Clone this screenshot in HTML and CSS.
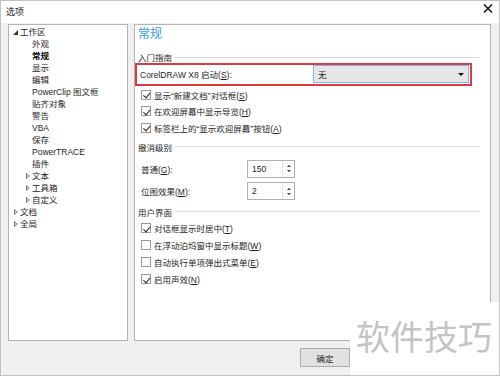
FILE: index.html
```html
<!DOCTYPE html>
<html lang="zh-CN">
<head>
    <meta charset="UTF-8" />
    <meta name="viewport" content="width=device-width, initial-scale=1.0"/>
    <title>选项</title>
    <link rel="stylesheet" href="styles.css">
</head>
<body>
    <div class="dialog">
        <div class="titlebar">
            <span class="title">选项</span>
            <svg class="close" width="10" height="9" viewBox="0 0 10 9">
                <path d="M1 0.5 L9 8.5 M9 0.5 L1 8.5" stroke="#1a1a1a" stroke-width="1.6" fill="none"/>
            </svg>
        </div>

        <div class="panels">
            <!-- Tree -->
            <div class="tree">
                <div class="node lvl0"><span class="tog open"></span>工作区</div>
                <div class="node lvl1"><span class="tog"></span>外观</div>
                <div class="node lvl1 selected"><span class="tog"></span>常规</div>
                <div class="node lvl1"><span class="tog"></span>显示</div>
                <div class="node lvl1"><span class="tog"></span>编辑</div>
                <div class="node lvl1"><span class="tog"></span>PowerClip 图文框</div>
                <div class="node lvl1"><span class="tog"></span>贴齐对象</div>
                <div class="node lvl1"><span class="tog"></span>警告</div>
                <div class="node lvl1"><span class="tog"></span>VBA</div>
                <div class="node lvl1"><span class="tog"></span>保存</div>
                <div class="node lvl1"><span class="tog"></span>PowerTRACE</div>
                <div class="node lvl1"><span class="tog"></span>插件</div>
                <div class="node lvl1"><span class="tog closed"></span>文本</div>
                <div class="node lvl1"><span class="tog closed"></span>工具箱</div>
                <div class="node lvl1"><span class="tog closed"></span>自定义</div>
                <div class="node lvl0"><span class="tog closed"></span>文档</div>
                <div class="node lvl0"><span class="tog closed"></span>全局</div>
            </div>

            <!-- Page -->
            <div class="page">
                <div class="page-title">常规</div>

                <div class="group g-start"><span>入门指南</span><i></i></div>
                <div class="startup-row">
                    <span class="label">CorelDRAW X8 启动(<u>S</u>):</span>
                    <div class="select"><span>无</span><b class="arrow"></b></div>
                </div>
                <div class="checks c-start">
                    <label class="check"><span class="box on"></span><span>显示“新建文档”对话框(<u>S</u>)</span></label>
                    <label class="check"><span class="box on"></span><span>在欢迎屏幕中显示导览(<u>H</u>)</span></label>
                    <label class="check"><span class="box on"></span><span>标签栏上的“显示欢迎屏幕”按钮(<u>A</u>)</span></label>
                </div>

                <div class="group g-undo"><span>撤消级别</span><i></i></div>
                <div class="spins">
                    <div class="spin-row">
                        <span class="spin-label">普通(<u>G</u>):</span>
                        <div class="spin"><span>150</span><div class="spin-btns"><b class="up"></b><b class="down"></b></div></div>
                    </div>
                    <div class="spin-row">
                        <span class="spin-label">位图效果(<u>M</u>):</span>
                        <div class="spin"><span>2</span><div class="spin-btns"><b class="up"></b><b class="down"></b></div></div>
                    </div>
                </div>

                <div class="group g-ui"><span>用户界面</span><i></i></div>
                <div class="checks c-ui">
                    <label class="check tall"><span class="box on"></span><span>对话框显示时居中(<u>T</u>)</span></label>
                    <label class="check tall"><span class="box"></span><span>在浮动泊坞窗中显示标题(<u>W</u>)</span></label>
                    <label class="check tall"><span class="box"></span><span>自动执行单项弹出式菜单(<u>E</u>)</span></label>
                    <label class="check tall"><span class="box on"></span><span>启用声效(<u>N</u>)</span></label>
                </div>
            </div>
        </div>

        <div class="footer">
            <button>确定</button>
        </div>

        <div class="watermark">软件技巧</div>
    </div>
</body>
</html>
```

FILE: styles.css
```css
* {
    margin: 0;
    padding: 0;
    box-sizing: border-box;
}

body {
    font-family: "Liberation Sans", "Noto Sans CJK SC", sans-serif;
    font-size: 8.5px;
    color: #1e1e1e;
    background: #ffffff;
    text-autospace: no-autospace;
}

u {
    text-decoration: underline;
    text-underline-offset: 1px;
}

.dialog {
    position: relative;
    width: 500px;
    height: 376px;
    border: 1px solid #c2c2c2;
    background: #f0f0f0;
    display: flex;
    flex-direction: column;
    overflow: hidden;
}

/* Title bar */
.titlebar {
    height: 22px;
    background: #ffffff;
    display: flex;
    align-items: center;
    justify-content: space-between;
    padding: 0 6px 2px 5px;
}

.title {
    font-size: 9px;
    color: #222;
}

.close {
    margin-top: -6px;
}

/* Panels */
.panels {
    display: flex;
    gap: 6px;
    margin-top: 1px;
    padding-left: 7px;
    height: 317px;
}

.tree {
    width: 120px;
    background: #ffffff;
    border: 1px solid #b4b4b4;
    padding-top: 1px;
}

.node {
    height: 12px;
    line-height: 12px;
    display: flex;
    align-items: center;
    white-space: nowrap;
}

.node.lvl0 {
    padding-left: 3px;
}

.node.lvl1 {
    padding-left: 15px;
}

.node.selected {
    color: #000;
    text-shadow: 0 0 0.3px #000;
}

.tog {
    width: 8px;
    height: 12px;
    position: relative;
    flex: none;
}

.tog.open::before {
    content: '';
    position: absolute;
    left: 1px;
    top: 4px;
    border-left: 5px solid transparent;
    border-bottom: 5px solid #333;
}

.tog.closed::before {
    content: '';
    position: absolute;
    left: 2px;
    top: 3px;
    width: 0;
    height: 0;
    border-top: 3px solid transparent;
    border-bottom: 3px solid transparent;
    border-left: 4px solid #777;
}

.tog.closed::after {
    content: '';
    position: absolute;
    left: 3px;
    top: 4.5px;
    width: 0;
    height: 0;
    border-top: 1.5px solid transparent;
    border-bottom: 1.5px solid transparent;
    border-left: 2px solid #fff;
}

.page {
    width: 357px;
    background: #ffffff;
    border: 1px solid #b4b4b4;
    display: flex;
    flex-direction: column;
}

.page-title {
    height: 18px;
    line-height: 18px;
    margin-left: 3px;
    font-size: 12px;
    color: #3a9be0;
}

/* Group headers */
.group {
    height: 12px;
    display: flex;
    align-items: center;
    margin: 0 10px 0 3px;
}

.group i {
    flex: 1;
    height: 1px;
    background: #dcdcdc;
    margin-left: 3px;
}

.g-start { margin-top: 8px; }
.g-undo { margin-top: 4.5px; }
.g-ui { margin-top: 3px; }

/* Startup row */
.startup-row {
    width: 337px;
    height: 23px;
    border: 2px solid #dc3a40;
    display: flex;
    align-items: center;
    justify-content: space-between;
    padding: 0 1px 1px 3px;
}

.select {
    width: 156px;
    height: 18px;
    background: #e6e6e6;
    border: 1px solid #80b6ea;
    display: flex;
    align-items: center;
    justify-content: space-between;
    padding: 0 4px;
}

.arrow {
    width: 0;
    height: 0;
    border-left: 3px solid transparent;
    border-right: 3px solid transparent;
    border-top: 3px solid #111;
}

/* Checkboxes */
.checks {
    display: flex;
    flex-direction: column;
    margin-left: 6px;
}

.c-start { margin-top: 0.5px; }
.c-ui { margin-top: 2px; }

.check {
    height: 16.5px;
    display: flex;
    align-items: center;
    gap: 3px;
    white-space: nowrap;
}

.check.tall {
    height: 17px;
}

.box {
    width: 10px;
    height: 10px;
    border: 1px solid #9a9a9a;
    background: #fff;
    position: relative;
    flex: none;
}

.box.on::after {
    content: '';
    position: absolute;
    left: 2.5px;
    top: 0.5px;
    width: 3px;
    height: 5.5px;
    border-right: 1.3px solid #222;
    border-bottom: 1.3px solid #222;
    transform: rotate(40deg);
}

/* Spin boxes */
.spins {
    margin-top: 5px;
    margin-left: 6px;
}

.spin-row {
    height: 22.5px;
    display: flex;
    align-items: center;
}

.spin-label {
    width: 106px;
}

.spin {
    width: 48px;
    height: 18px;
    border: 1px solid #aeb1b8;
    display: flex;
    align-items: center;
    justify-content: space-between;
    padding-left: 4px;
}

.spin-btns {
    width: 12px;
    height: 100%;
    border-left: 1px solid #e3e3e3;
    display: flex;
    flex-direction: column;
    align-items: center;
    justify-content: center;
    gap: 3px;
}

.spin-btns .up {
    border-left: 2px solid transparent;
    border-right: 2px solid transparent;
    border-bottom: 2.5px solid #333;
}

.spin-btns .down {
    border-left: 2px solid transparent;
    border-right: 2px solid transparent;
    border-top: 2.5px solid #333;
}

/* Footer */
.footer {
    margin-top: 7px;
    display: flex;
    padding-left: 299px;
}

.footer button {
    width: 50px;
    height: 19px;
    background: #e1e1e1;
    border: 1px solid #adadad;
    font-family: inherit;
    font-size: 8.5px;
    color: #1e1e1e;
}

/* Watermark overlay */
.watermark {
    position: absolute;
    left: 349px;
    top: 301px;
    right: -1px;
    bottom: -1px;
    background: #ffffff;
    padding: 17px 0 0 6px;
    font-family: "Noto Sans CJK SC", sans-serif;
    font-size: 34px;
    line-height: 34px;
    color: #c4c4c4;
    white-space: nowrap;
    overflow: hidden;
}
```
